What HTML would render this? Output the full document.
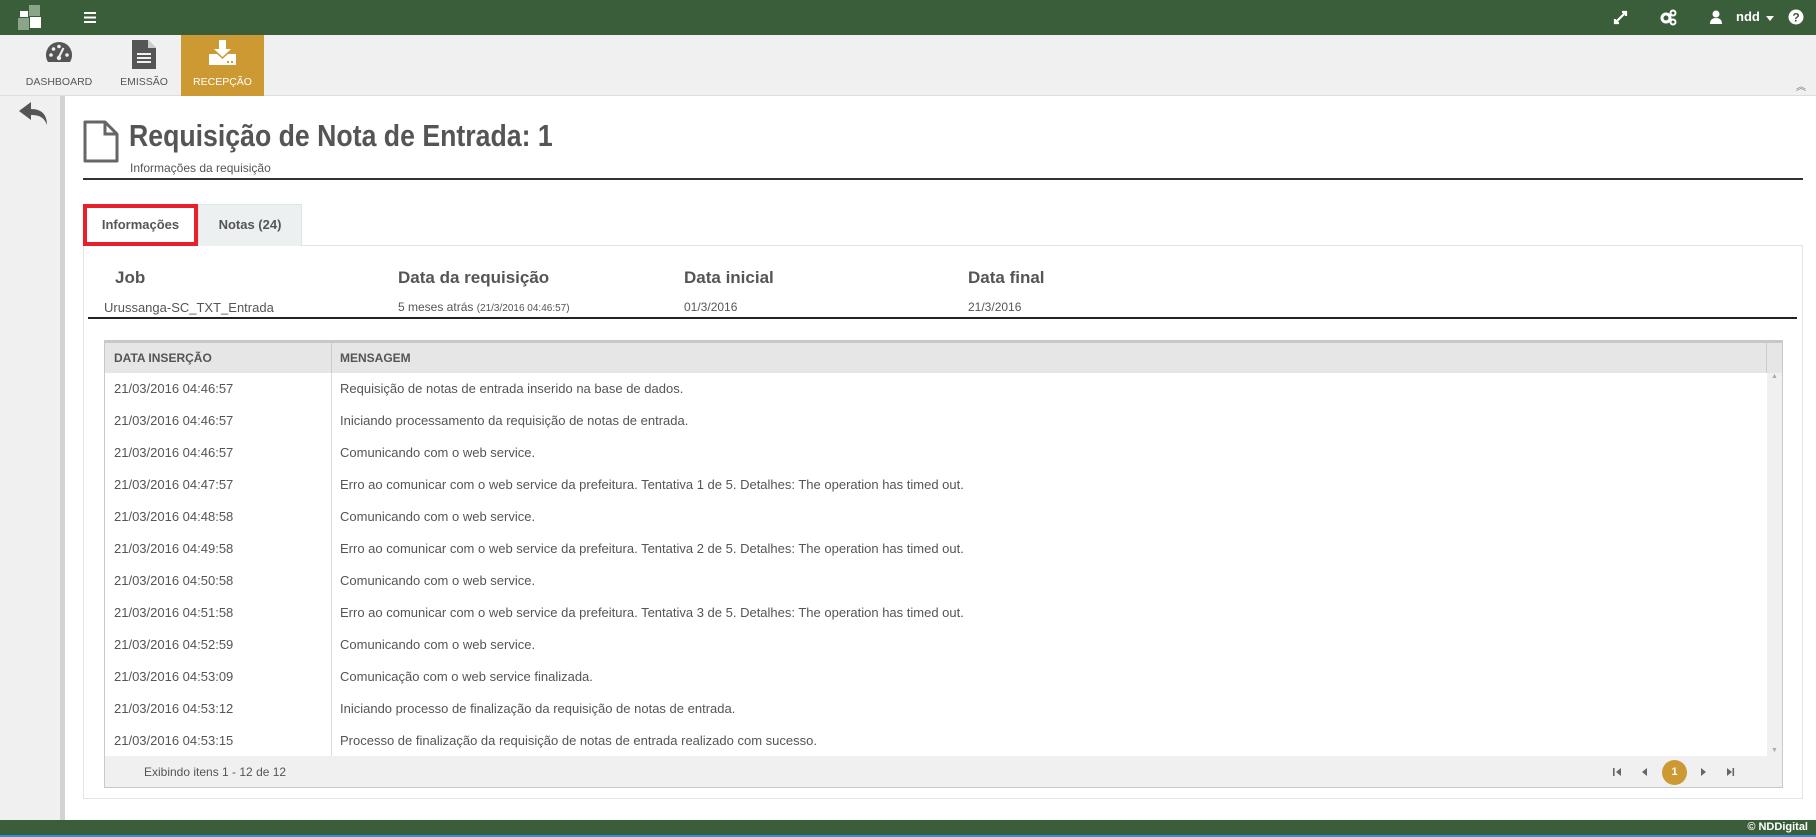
<!DOCTYPE html>
<html><head><meta charset="utf-8"><style>
*{box-sizing:border-box;margin:0;padding:0}
body{width:1816px;height:837px;overflow:hidden;background:#fff;font-family:"Liberation Sans",sans-serif;color:#555;position:relative}
.abs{position:absolute}
#top{left:0;top:0;width:1816px;height:35px;background:#3a5e3a}
#tb{left:0;top:35px;width:1816px;height:61px;background:#f0f0f0;border-bottom:1px solid #ddd}
.tool{position:absolute;top:0;height:61px;text-align:center;font-size:10.5px;color:#555}
.tool span{position:absolute;bottom:8px;left:0;right:0}
#side{left:0;top:96px;width:65px;height:724px;background:#f0f0f0;border-right:5px solid #d3d3d3}
.hd{font-size:17px;font-weight:bold;color:#555;position:absolute;top:268px}
.val{font-size:12px;color:#555;position:absolute;top:300px}
.row{position:absolute;left:0;width:1661px;height:32px;font-size:13px;line-height:32px}
.row .d{position:absolute;left:9px}
.row .m{position:absolute;left:235px}
</style></head><body>
<div id="top" class="abs">
 <svg class="abs" style="left:18px;top:5px" width="26" height="27"><rect x="11" y="0" width="11" height="11" fill="#8aa58a"/><rect x="0" y="13" width="11" height="12" fill="#8aa58a"/><rect x="12" y="12" width="11" height="11" fill="#fff"/><rect x="2" y="6" width="8" height="6" fill="#fff"/></svg>
 <svg class="abs" style="left:84px;top:12px" width="12" height="11"><rect y="0" width="12" height="2" fill="#fff"/><rect y="4.5" width="12" height="2" fill="#fff"/><rect y="9" width="12" height="2" fill="#fff"/></svg>
 <svg class="abs" style="left:1613px;top:10px" width="15" height="15"><path d="M2 13 L13 2 M9 2h4v4 M2 9v4h4" stroke="#fff" stroke-width="2.2" fill="none"/></svg>
 <svg class="abs" style="left:1660px;top:9px" width="17" height="17"><circle cx="6" cy="9" r="4" fill="none" stroke="#fff" stroke-width="3"/><circle cx="13" cy="4" r="2.5" fill="none" stroke="#fff" stroke-width="2"/><circle cx="13" cy="13" r="2.5" fill="none" stroke="#fff" stroke-width="2"/></svg>
 <svg class="abs" style="left:1709px;top:10px" width="14" height="14"><circle cx="7" cy="4" r="3.5" fill="#fff"/><path d="M1 14 Q1 8 7 8 Q13 8 13 14Z" fill="#fff"/></svg>
 <div class="abs" style="left:1736px;top:9px;color:#fff;font-size:13px;font-weight:bold">ndd</div>
 <svg class="abs" style="left:1766px;top:16px" width="8" height="5"><path d="M0 0h8L4 5z" fill="#fff"/></svg>
 <svg class="abs" style="left:1788px;top:9px" width="16" height="16"><circle cx="8" cy="8" r="7.5" fill="#fff"/><text x="8" y="12.5" text-anchor="middle" font-size="12" font-weight="bold" fill="#3a5e3a" font-family="Liberation Sans">?</text></svg>
</div>
<div id="tb" class="abs">
 <div class="tool" style="left:18px;width:82px"><svg class="abs" style="left:27px;top:6px" width="28" height="24"><path d="M14 1A13 13 0 0 0 3 21h22A13 13 0 0 0 14 1z" fill="#555"/><circle cx="6" cy="14" r="1.8" fill="#f0f0f0"/><circle cx="8.5" cy="8" r="1.8" fill="#f0f0f0"/><circle cx="14" cy="5.5" r="1.8" fill="#f0f0f0"/><circle cx="22" cy="14" r="1.8" fill="#f0f0f0"/><path d="M18.5 7L14 16" stroke="#f0f0f0" stroke-width="2"/><circle cx="14" cy="17" r="2.2" fill="#f0f0f0"/></svg><span>DASHBOARD</span></div>
 <div class="tool" style="left:110px;width:68px"><svg class="abs" style="left:22px;top:5px" width="24" height="29"><path d="M0 0h16l8 8v21H0z" fill="#555"/><path d="M16 0v8h8" fill="#ccc"/><rect x="5" y="13" width="14" height="2" fill="#f0f0f0"/><rect x="5" y="17" width="14" height="2" fill="#f0f0f0"/><rect x="5" y="21" width="14" height="2" fill="#f0f0f0"/></svg><span>EMISSÃO</span></div>
 <div class="tool" style="left:181px;width:83px;background:#cc9933;color:#fff"><svg class="abs" style="left:28px;top:5px" width="27" height="25"><path d="M10 0h7v9h5l-8.5 8L5 9h5z" fill="#fff"/><path d="M0 14h8l5.5 5 5.5-5h8v11H0z" fill="#fff"/><rect x="18" y="21" width="2" height="2" fill="#cc9933"/><rect x="22" y="21" width="2" height="2" fill="#cc9933"/></svg><span>RECEPÇÃO</span></div>
 <div class="abs" style="left:1796px;top:43px;font-size:10px;color:#777">︽</div>
</div>
<div id="side" class="abs"><svg class="abs" style="left:19px;top:6px" width="30" height="24"><path d="M12 0L0 9l12 9v-5c8 0 13 2 16 10 0-10-5-16-16-16z" fill="#555"/></svg></div>

<svg class="abs" style="left:83px;top:120px" width="36" height="43"><path d="M2 2h20l12 12v27H2z" fill="none" stroke="#666" stroke-width="3" stroke-linejoin="round"/><path d="M22 2v12h12" fill="none" stroke="#666" stroke-width="3"/></svg>
<div class="abs" style="left:129px;top:118px;font-size:31px;font-weight:bold;color:#555;transform:scaleX(0.86);transform-origin:0 0;white-space:nowrap">Requisição de Nota de Entrada: 1</div>
<div class="abs" style="left:130px;top:161px;font-size:12px;color:#555">Informações da requisição</div>
<div class="abs" style="left:83px;top:178px;width:1720px;height:2px;background:#333"></div>

<div class="abs" style="left:83px;top:245px;width:1720px;height:554px;border:1px solid #dde5e5"></div>
<div class="abs" style="left:198px;top:204px;width:104px;height:42px;background:#edf0f0;border:1px solid #dde5e5;border-bottom:none;font-size:13px;font-weight:bold;text-align:center;line-height:40px">Notas (24)</div>
<div class="abs" style="left:83px;top:204px;width:115px;height:42px;background:#fff;border:4px solid #e8202a;font-size:13px;font-weight:bold;text-align:center;line-height:34px">Informações</div>

<div class="hd" style="left:115px">Job</div>
<div class="hd" style="left:398px">Data da requisição</div>
<div class="hd" style="left:684px">Data inicial</div>
<div class="hd" style="left:968px">Data final</div>
<div class="val" style="left:104px;font-size:13px">Urussanga-SC_TXT_Entrada</div>
<div class="val" style="left:398px">5 meses atrás <span style="font-size:10px">(21/3/2016 04:46:57)</span></div>
<div class="val" style="left:684px">01/3/2016</div>
<div class="val" style="left:968px">21/3/2016</div>
<div class="abs" style="left:88px;top:317px;width:1709px;height:2px;background:#222"></div>

<div class="abs" style="left:104px;top:340px;width:1679px;height:448px;border:1px solid #c8c8c8;border-top:3px solid #c8c8c8;overflow:hidden">
 <div class="abs" style="left:0;top:0;width:1677px;height:30px;background:#e6e6e6;font-size:12px;font-weight:bold;line-height:30px">
  <span class="abs" style="left:9px">DATA INSERÇÃO</span><span class="abs" style="left:235px">MENSAGEM</span>
  <div class="abs" style="left:226px;top:0;width:1px;height:30px;background:#ccc"></div>
 </div>
 <div class="abs" style="left:226px;top:30px;width:1px;height:383px;background:#ddd"></div>
 <div class="abs" style="left:1661px;top:0;width:1px;height:30px;background:#ccc"></div>
 <div class="abs" style="left:1662px;top:30px;width:15px;height:383px;background:#f0f0f0;font-size:7px;color:#aaa;text-align:center">▲<div style="position:absolute;bottom:2px;width:15px">▼</div></div>
 <div class="abs" style="left:0;top:30px;width:1661px;height:383px">
  <div class="row" style="top:0"><span class="d">21/03/2016 04:46:57</span><span class="m">Requisição de notas de entrada inserido na base de dados.</span></div>
  <div class="row" style="top:32px"><span class="d">21/03/2016 04:46:57</span><span class="m">Iniciando processamento da requisição de notas de entrada.</span></div>
  <div class="row" style="top:64px"><span class="d">21/03/2016 04:46:57</span><span class="m">Comunicando com o web service.</span></div>
  <div class="row" style="top:96px"><span class="d">21/03/2016 04:47:57</span><span class="m">Erro ao comunicar com o web service da prefeitura. Tentativa 1 de 5. Detalhes: The operation has timed out.</span></div>
  <div class="row" style="top:128px"><span class="d">21/03/2016 04:48:58</span><span class="m">Comunicando com o web service.</span></div>
  <div class="row" style="top:160px"><span class="d">21/03/2016 04:49:58</span><span class="m">Erro ao comunicar com o web service da prefeitura. Tentativa 2 de 5. Detalhes: The operation has timed out.</span></div>
  <div class="row" style="top:192px"><span class="d">21/03/2016 04:50:58</span><span class="m">Comunicando com o web service.</span></div>
  <div class="row" style="top:224px"><span class="d">21/03/2016 04:51:58</span><span class="m">Erro ao comunicar com o web service da prefeitura. Tentativa 3 de 5. Detalhes: The operation has timed out.</span></div>
  <div class="row" style="top:256px"><span class="d">21/03/2016 04:52:59</span><span class="m">Comunicando com o web service.</span></div>
  <div class="row" style="top:288px"><span class="d">21/03/2016 04:53:09</span><span class="m">Comunicação com o web service finalizada.</span></div>
  <div class="row" style="top:320px"><span class="d">21/03/2016 04:53:12</span><span class="m">Iniciando processo de finalização da requisição de notas de entrada.</span></div>
  <div class="row" style="top:352px"><span class="d">21/03/2016 04:53:15</span><span class="m">Processo de finalização da requisição de notas de entrada realizado com sucesso.</span></div>
 </div>
 <div class="abs" style="left:0;top:413px;width:1677px;height:32px;background:#f0f0f0;font-size:12px;line-height:32px">
  <span class="abs" style="left:39px">Exibindo itens 1 - 12 de 12</span>
  <svg class="abs" style="left:1508px;top:11px" width="10" height="10"><rect x="0" y="1" width="1.6" height="8" fill="#666"/><path d="M8 1v8L3 5z" fill="#666"/></svg>
  <svg class="abs" style="left:1535px;top:11px" width="10" height="10"><path d="M7 1v8L2 5z" fill="#666"/></svg>
  <div class="abs" style="left:1557px;top:4px;width:25px;height:25px;border-radius:50%;background:#cc9933;color:#fff;font-size:11px;font-weight:bold;text-align:center;line-height:25px">1</div>
  <svg class="abs" style="left:1593px;top:11px" width="10" height="10"><path d="M3 1v8l5-4z" fill="#666"/></svg>
  <svg class="abs" style="left:1620px;top:11px" width="10" height="10"><path d="M2 1v8l5-4z" fill="#666"/><rect x="7.5" y="1" width="1.6" height="8" fill="#666"/></svg>
 </div>
</div>

<div class="abs" style="left:0;top:820px;width:1816px;height:15px;background:#3a5e3a;color:#fff;font-size:11px;font-weight:bold;text-align:right;padding-right:8px;line-height:15px">© NDDigital</div>
<div class="abs" style="left:0;top:835px;width:1816px;height:2px;background:#2f8fd8"></div>
</body></html>
